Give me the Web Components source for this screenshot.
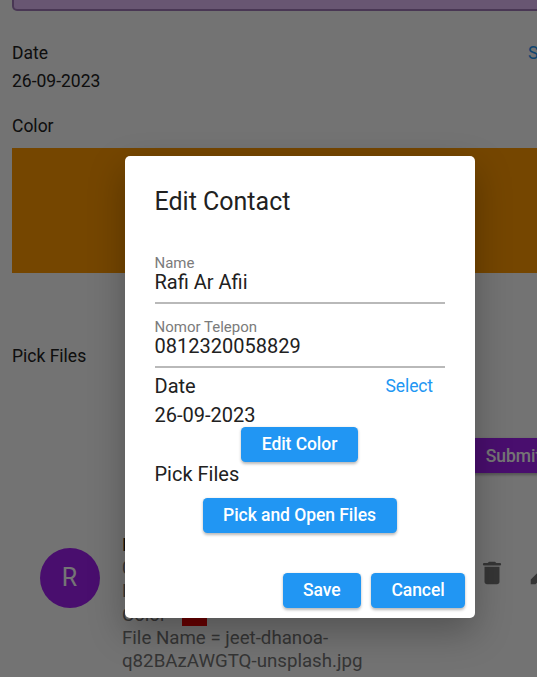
<!DOCTYPE html>
<html lang="en"><head><meta charset="utf-8"><title>Edit Contact</title>
<style>
html,body{margin:0;height:100%;overflow:hidden}
body{font-family:Roboto,"Liberation Sans",sans-serif;background:#fafafa}
</style></head><body>
<contact-page></contact-page>
<script>
const define = (name, html) => customElements.define(name, class extends HTMLElement {
  connectedCallback() {
    if (this.shadowRoot) return;
    const t = document.createElement('template');
    t.innerHTML = html;
    this.attachShadow({mode: 'open'}).append(t.content.cloneNode(true));
  }
});

define('flat-button', `<style>
:host{display:flex;align-items:center;justify-content:center;box-sizing:border-box;height:35px;flex:none;
 border-radius:4.5px;background:var(--fill,#2196f3);color:#fff;font-size:17.5px;font-weight:500;line-height:20px;letter-spacing:-.06px;
 white-space:nowrap;box-shadow:0 1.5px 3px rgba(0,0,0,.28)}
</style><slot></slot>`);

define('text-field', `<style>
:host{display:block;height:64px;box-sizing:border-box;border-bottom:2px solid #b9b9b9;padding-top:13.5px}
.label{font-size:15px;line-height:18px;color:#7b7b7b}
.value{font-size:20px;line-height:24px;margin-top:-1.5px;color:#212121}
</style><div class="label"><slot name="label"></slot></div><div class="value"><slot></slot></div>`);

define('contact-avatar', `<style>
:host{display:flex;align-items:center;justify-content:center;width:60px;height:60px;border-radius:50%;
 background:#a020f0;color:#fff;font-size:25px;line-height:30px;flex:none}
</style><slot></slot>`);

define('contact-item', `<style>
:host{display:flex;height:150px;padding-left:39.5px;box-sizing:border-box}
contact-avatar{margin-top:22px}
.info{margin:7.5px 0 0 22.5px;width:260px;flex:none;color:#757575;font-size:18.7px;line-height:23.2px}
.name{color:#212121}
.color{display:flex;gap:16px;align-items:center;height:23.2px}
.chip{width:25px;height:25px;background:#e60000;margin-top:-3px}
.actions{display:flex;gap:19.5px;margin:32px 0 0 95px;flex:none}
svg{width:30px;height:30px;fill:#757575;display:block;flex:none}
</style>
<contact-avatar>R</contact-avatar>
<div class="info"><div class="name">Rafi Ar Afii</div><div>0812320058829</div><div>Date = 26-09-2023</div>
<div class="color"><span>Color</span><i class="chip"></i></div><div>File Name = jeet-dhanoa-<br>q82BAzAWGTQ-unsplash.jpg</div></div>
<div class="actions"><svg viewBox="0 0 24 24"><path d="M6 19c0 1.100.9 2 2 2h8c1.100 0 2-.9 2-2V7H6v12zM18.300 4h-2.800l-.7-.7c-.2-.2-.45-.3-.7-.3H9.900c-.25 0-.5.1-.7.300l-.7.700H5.700a1 1 0 0 0 0 2h12.600a1 1 0 0 0 0-2z"/></svg>
<svg viewBox="0 0 24 24"><path d="M3 17.250V21h3.750L17.810 9.940l-3.750-3.750L3 17.250zM20.710 7.040c.39-.39.39-1.020 0-1.410l-2.340-2.340c-.39-.39-1.020-.39-1.410 0l-1.830 1.830 3.750 3.750 1.830-1.830z"/></svg></div>`);

define('edit-dialog', `<style>
:host{display:block;box-sizing:border-box;width:350px;height:461.5px;padding:31px 30px 9.5px;border-radius:5px;
 background:#fff;color:#212121;font-size:20px;line-height:24px;
 box-shadow:0 14px 36px rgba(0,0,0,.28)}
h1{font-size:25px;line-height:30px;font-weight:400;margin:0 0 23px}
.date{display:flex;justify-content:space-between;align-items:center;margin-top:5.5px;padding-right:11.5px}
.date span{font-size:17.5px;letter-spacing:-.1px;color:#2196f3}
.value{margin-top:5px}
.color{width:116.5px;margin:0 auto}
.files{width:194px;margin:12px auto 40px}
.row{display:flex;justify-content:flex-end;gap:10.5px;margin-right:-20.500px}
.save{width:77.5px}.cancel{width:94px}
</style>
<h1>Edit Contact</h1>
<text-field><span slot="label">Name</span>Rafi Ar Afii</text-field>
<text-field><span slot="label">Nomor Telepon</span>0812320058829</text-field>
<div class="date">Date<span>Select</span></div>
<div class="value">26-09-2023</div>
<flat-button class="color">Edit Color</flat-button>
<div class="pick">Pick Files</div>
<flat-button class="files">Pick and Open Files</flat-button>
<div class="row"><flat-button class="save">Save</flat-button><flat-button class="cancel">Cancel</flat-button></div>`);

define('contact-page', `<style>
:host{display:block;position:relative;width:537px;height:677px;overflow:hidden;color:#212121;font-size:17.5px;line-height:20px}
.field{height:11px;box-sizing:border-box;margin:0 -20px 0 12px;background:#e2bbf8;border:2px solid #a078b8;border-top:0;border-radius:0 0 5px 5px}
.date{display:flex;justify-content:space-between;margin:32px -39px 0 12px}
.date span{color:#2196f3}
.line{margin:8px 0 0 12px}
.label{margin:25px 0 0 12px}
.swatch{height:125px;margin:12.400px 0 0 12px;background:#ff9800}
.files{margin:72.600px 0 0 12px}
.submit{--fill:#a020f0;width:97px;margin:72.500px 0 0 465px}
contact-item{margin-top:53px}
.scrim{position:absolute;inset:0;background:rgba(0,0,0,.54)}
edit-dialog{position:absolute;left:124.5px;top:156px}
</style>
<div class="field"></div>
<div class="date">Date<span>Select</span></div>
<div class="line">26-09-2023</div>
<div class="label">Color</div>
<div class="swatch"></div>
<div class="files">Pick Files</div>
<flat-button class="submit">Submit</flat-button>
<contact-item></contact-item>
<div class="scrim"></div>
<edit-dialog></edit-dialog>`);
</script></body></html>
